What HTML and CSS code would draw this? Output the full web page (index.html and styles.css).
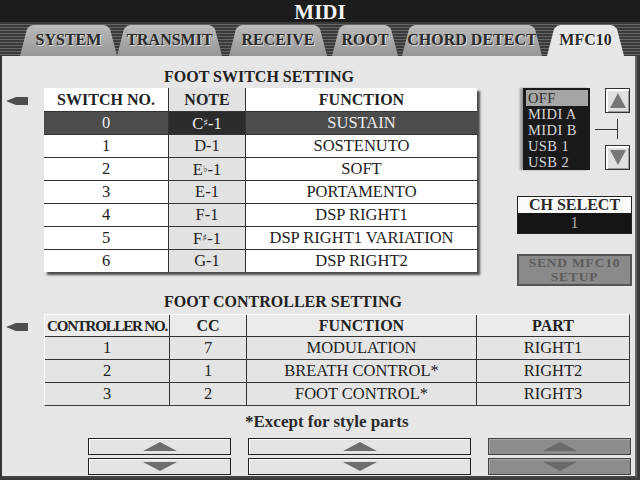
FILE: index.html
```html
<!DOCTYPE html>
<html lang="en">

<head>
  <meta charset="UTF-8" />
  <title>MIDI - MFC10</title>
  <link rel="stylesheet" href="styles.css">
</head>

<body>
  <header class="titlebar">MIDI</header>

  <nav class="tabs">
    <div class="tab tab-system">SYSTEM</div>
    <div class="tab tab-transmit">TRANSMIT</div>
    <div class="tab tab-receive">RECEIVE</div>
    <div class="tab tab-root">ROOT</div>
    <div class="tab tab-chord">CHORD DETECT</div>
    <div class="tab tab-mfc active">MFC10</div>
  </nav>

  <main class="panel">
    <section class="upper">
      <div class="lane lane-top"><div class="pointer"></div></div>

      <div class="switches">
        <h2 class="caption">FOOT SWITCH SETTING</h2>
        <table class="grid switch-table">
          <colgroup>
            <col class="c-no">
            <col class="c-note">
            <col>
          </colgroup>
          <tr>
            <th>SWITCH NO.</th>
            <th class="note">NOTE</th>
            <th>FUNCTION</th>
          </tr>
          <tr class="sel">
            <td>0</td>
            <td class="note">C<span class="acc">♯</span>-1</td>
            <td>SUSTAIN</td>
          </tr>
          <tr>
            <td>1</td>
            <td class="note">D-1</td>
            <td>SOSTENUTO</td>
          </tr>
          <tr>
            <td>2</td>
            <td class="note">E<span class="acc">♭</span>-1</td>
            <td>SOFT</td>
          </tr>
          <tr>
            <td>3</td>
            <td class="note">E-1</td>
            <td>PORTAMENTO</td>
          </tr>
          <tr>
            <td>4</td>
            <td class="note">F-1</td>
            <td>DSP RIGHT1</td>
          </tr>
          <tr>
            <td>5</td>
            <td class="note">F<span class="acc">♯</span>-1</td>
            <td>DSP RIGHT1 VARIATION</td>
          </tr>
          <tr>
            <td>6</td>
            <td class="note">G-1</td>
            <td>DSP RIGHT2</td>
          </tr>
        </table>
      </div>

      <aside class="side">
        <div class="port">
          <ul class="port-list">
            <li class="on">OFF</li>
            <li>MIDI A</li>
            <li>MIDI B</li>
            <li>USB 1</li>
            <li>USB 2</li>
          </ul>
          <div class="stub"></div>
          <div class="spin">
            <button class="spin-btn"><span class="tri-up"></span></button>
            <div class="joint"><div class="hline"></div><div class="vline"></div></div>
            <button class="spin-btn"><span class="tri-down"></span></button>
          </div>
        </div>

        <div class="ch-select">
          <div class="ch-label">CH SELECT</div>
          <div class="ch-value">1</div>
        </div>

        <button class="send">SEND MFC10<br>SETUP</button>
      </aside>
    </section>

    <section class="lower">
      <h2 class="caption">FOOT CONTROLLER SETTING</h2>
      <div class="lane lane-bottom"><div class="pointer"></div></div>
      <table class="grid ctrl-table">
        <colgroup>
          <col class="c-no">
          <col class="c-note">
          <col class="c-func">
          <col>
        </colgroup>
        <tr>
          <th class="narrow">CONTROLLER NO.</th>
          <th>CC</th>
          <th>FUNCTION</th>
          <th>PART</th>
        </tr>
        <tr>
          <td>1</td>
          <td>7</td>
          <td>MODULATION</td>
          <td>RIGHT1</td>
        </tr>
        <tr>
          <td>2</td>
          <td>1</td>
          <td>BREATH CONTROL*</td>
          <td>RIGHT2</td>
        </tr>
        <tr>
          <td>3</td>
          <td>2</td>
          <td>FOOT CONTROL*</td>
          <td>RIGHT3</td>
        </tr>
      </table>
    </section>

    <p class="remark">*Except for style parts</p>

    <div class="steppers">
      <div class="stepper small">
        <button class="step"><span class="arr-up"></span></button>
        <button class="step"><span class="arr-down"></span></button>
      </div>
      <div class="stepper wide">
        <button class="step"><span class="arr-up"></span></button>
        <button class="step"><span class="arr-down"></span></button>
      </div>
      <div class="stepper small off">
        <button class="step"><span class="arr-up"></span></button>
        <button class="step"><span class="arr-down"></span></button>
      </div>
    </div>
  </main>
</body>

</html>
```

FILE: styles.css
```css
* { margin: 0; padding: 0; box-sizing: border-box; }
body {
  width: 640px; height: 480px; overflow: hidden;
  background: #3a3a3a; color: #222;
  font-family: "Liberation Serif", "DejaVu Serif", serif;
}

/* title + tabs */
.titlebar {
  height: 22px; background: #1c1c1c; color: #f2f2f2;
  text-align: center; font-size: 21px; font-weight: bold; line-height: 24px;
}
.tabs {
  height: 34px; display: flex; align-items: flex-end; padding-left: 20px;
  background: repeating-linear-gradient(#3a3a3a 0 2px, #666 2px 3px);
}
.tab {
  height: 31px; padding-top: 6px; text-align: center;
  font-size: 16px; font-weight: bold; line-height: 18px; color: #2a2a2a;
  text-shadow: 1px 1px 0 #dcdcdc;
  background: linear-gradient(#bcbcbc, #969696);
  clip-path: polygon(0 100%, 7px 4px, 10px 1px, 13px 0, calc(100% - 13px) 0, calc(100% - 10px) 1px, calc(100% - 7px) 4px, 100% 100%);
}
.tab-system { width: 97px; }
.tab-transmit { width: 105px; }
.tab-receive { width: 98px; margin-left: 7px; }
.tab-root { width: 66px; margin-left: 5px; }
.tab-chord { width: 140px; margin-left: 4px; }
.tab-mfc { width: 77px; margin-left: 5px; }
.tab.active { background: #e6e6e6; text-shadow: 1px 1px 0 #fff; }

/* panel */
.panel {
  width: 637px; height: 422px; background: #e6e6e6;
  border-left: 2px solid #333; border-right: 2px solid #666;
  border-bottom: 2px solid #444;
}
.upper { display: flex; }
.lane { width: 42px; padding-left: 4px; }
.lane-top { padding-top: 41px; }
.pointer {
  width: 22px; height: 8px; background: #4e4e4e;
  clip-path: polygon(0 50%, 45% 0, 100% 0, 100% 100%, 45% 100%);
}
.caption {
  font-size: 16px; font-weight: bold; line-height: 18px;
  padding-left: 120px; color: #222;
}
.switches { width: 433px; padding-top: 12px; }
.switches .caption { margin-bottom: 2px; }

/* tables */
.grid {
  width: 100%; table-layout: fixed; border-collapse: separate; border-spacing: 0;
  font-size: 16.5px; text-align: center;
}
.grid th, .grid td {
  height: 23px; padding: 0; border-left: 1px solid #333; line-height: 20px;
}
.grid th:first-child, .grid td:first-child { border-left: 0; }
.grid td { border-top: 1px solid #333; }
.grid th { font-size: 16px; font-weight: bold; }
.c-no { width: 124px; }
.c-note { width: 77px; }
.c-func { width: 230px; }

.switch-table { background: #fff; box-shadow: 3px 3px 2px #4c4c4c; }
.switch-table .note { background: #e2e2e2; }
.switch-table .sel td { background: #4c4c4c; color: #ececec; }
.switch-table .sel td.note { background: #2c2c2c; }
.acc { font-family: "DejaVu Sans", sans-serif; font-size: 10px; vertical-align: 3px; }

/* right column */
.side { width: 116px; margin-left: 39px; padding-top: 32px; }
.port { display: flex; align-items: center; }
.port-list {
  list-style: none; width: 67px; height: 82px; margin-left: 7px;
  background: #1a1a1a; padding: 2px 2px 0 3px;
  font-size: 14.5px; letter-spacing: 0.4px; line-height: 16px; color: #d6d6d6;
  box-shadow: -3px 0 2px #9a9a9a;
}
.port-list li { padding-left: 2px; }
.port-list .on { background: #a6a6a6; color: #2a2a2a; }
.stub { width: 10px; margin-left: 5px; border-top: 1px solid #333; }
.spin { width: 25px; display: flex; flex-direction: column; }
.spin-btn {
  width: 25px; height: 25px; display: flex; align-items: center; justify-content: center;
  background: #e0e0e0; border: 1px solid #333;
  box-shadow: inset 2px 2px 0 #fff, inset -1px -1px 0 #9a9a9a;
}
.tri-up, .tri-down { width: 0; height: 0; border-left: 8px solid transparent; border-right: 8px solid transparent; }
.tri-up { border-bottom: 15px solid #777; }
.tri-down { border-top: 15px solid #777; }
.joint { height: 32px; display: flex; align-items: center; }
.hline { width: 12px; border-top: 1px solid #333; }
.vline { height: 20px; border-left: 1px solid #333; }

.ch-select { width: 115px; margin: 26px 0 0 1px; border: 1px solid #222; text-align: center; }
.ch-label {
  height: 16px; background: #fafafa; font-size: 16px; font-weight: bold; line-height: 16px;
  color: #2a2a2a;
}
.ch-value { height: 20px; background: #141414; color: #a8a8a8; font-size: 16px; line-height: 20px; }

.send {
  display: block; width: 115px; height: 32px; margin: 20px 0 0 1px;
  background: #8a8a8a; border: 2px solid #555; color: #5c5c5c;
  font-family: inherit; font-size: 13.5px; font-weight: bold; letter-spacing: 0.8px; line-height: 14px;
}

/* lower block */
.lower {
  display: grid; grid-template-columns: 42px 586px; padding-top: 7px;
}
.lower .caption { grid-column: 2; margin-bottom: 3px; }
.lane-bottom { padding-top: 9px; }
.ctrl-table {
  border-top: 1px solid #fafafa; border-left: 1px solid #fafafa;
  border-right: 1px solid #3a3a3a; border-bottom: 1px solid #3a3a3a;
  background: #e4e4e4;
}
.ctrl-table th { height: 21px; background: #ebebeb; }
.ctrl-table .narrow { font-size: 15px; letter-spacing: -1.2px; }

.remark {
  margin-top: 7px; padding-left: 243px;
  font-size: 17px; font-weight: bold; line-height: 18px; color: #2a2a2a;
}

.steppers { display: flex; gap: 17px; padding-left: 86px; margin-top: 7px; }
.stepper { display: flex; flex-direction: column; gap: 3px; }
.stepper.small { width: 143px; }
.stepper.wide { width: 223px; }
.step {
  height: 17px; display: flex; align-items: center; justify-content: center;
  background: #e4e4e4; border: 1px solid #222;
  box-shadow: inset 1px 1px 0 #fff;
}
.arr-up, .arr-down { width: 0; height: 0; border-left: 17px solid transparent; border-right: 17px solid transparent; }
.arr-up { border-bottom: 9px solid #6e6e6e; }
.arr-down { border-top: 9px solid #6e6e6e; }
.stepper.off .step { background: #8c8c8c; border-color: #444; box-shadow: inset 1px 1px 0 #a6a6a6; }
.stepper.off .arr-up { border-bottom-color: #6a6a6a; }
.stepper.off .arr-down { border-top-color: #6a6a6a; }
```
